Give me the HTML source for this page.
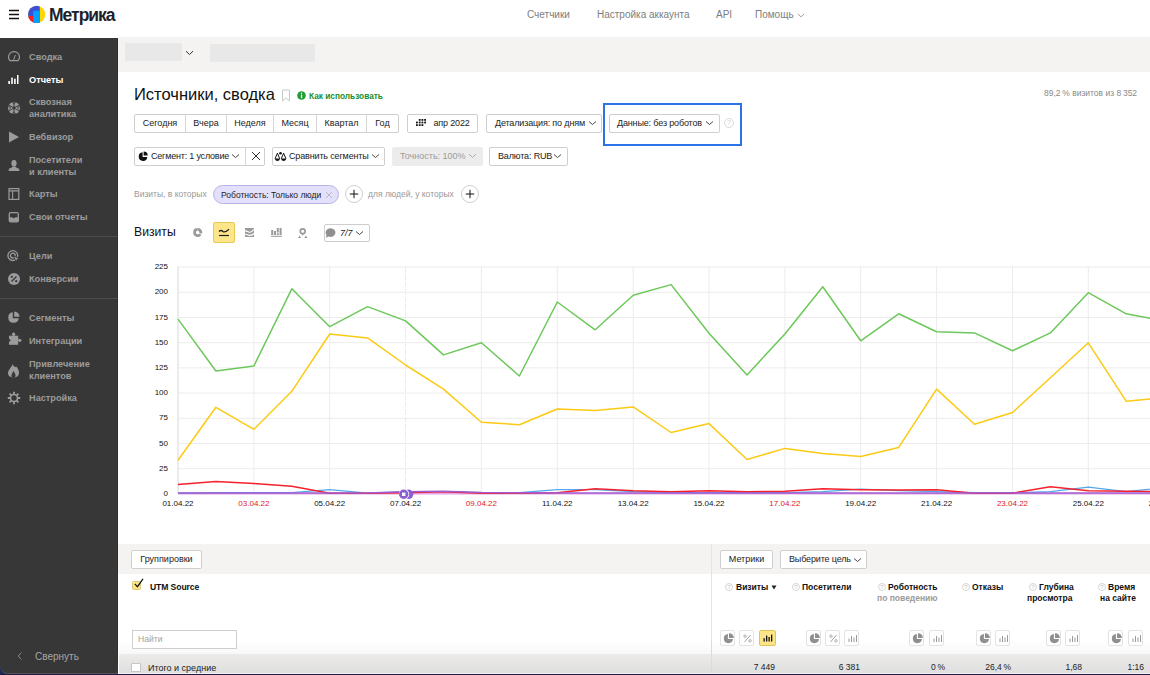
<!DOCTYPE html>
<html><head><meta charset="utf-8">
<style>
*{box-sizing:border-box;margin:0;padding:0}
html,body{width:1150px;height:675px;overflow:hidden;background:#fff;font-family:"Liberation Sans",sans-serif;position:relative}
.a{position:absolute;white-space:nowrap}
.nav{font-size:10px;color:#7d7d7d;top:9px;line-height:12px}
.side{left:0;top:38px;width:118px;height:637px;background:#373737;border-right:1px solid #2e2e2e}
.si{left:29px;font-size:9.2px;font-weight:bold;color:#9b9b9b;line-height:12px}
.sic{left:8px;width:12px;height:12px}
.btn{border:1px solid #cfcfcf;border-radius:2px;background:#fff;font-size:9px;color:#222;line-height:17px;text-align:center}
.grp .b{position:absolute;top:0;height:17px;border-right:1px solid #d6d6d6;font-size:9px;color:#222;line-height:17px;text-align:center}
.lbl{font-size:8px;color:#222}
.hdr{font-size:8.5px;font-weight:bold;color:#111;line-height:11px}
.q{width:8px;height:8px;border:1px solid #d6d6d6;border-radius:50%;font-size:6px;line-height:6px;text-align:center;color:#c4c4c4}
.ib{width:15px;height:16px;border:1px solid #e3e3e3;border-radius:2px;background:#fff}
.val{font-size:8.5px;color:#222;top:662px;line-height:11px}
</style></head><body>
<!-- header -->
<svg class="a" style="left:9px;top:9px" width="10" height="11" viewBox="0 0 10 11"><path d="M0 1.5H10M0 5.5H10M0 9.5H10" stroke="#111" stroke-width="1.4"/></svg>
<svg class="a" style="left:27px;top:5px" width="19" height="19" viewBox="0 0 19 19">
<defs><clipPath id="lc"><circle cx="9.67" cy="9.4" r="8.6"/></clipPath></defs>
<g clip-path="url(#lc)">
<rect x="0" y="0" width="19" height="19" fill="#ffd500"/>
<rect x="0" y="0" width="12.8" height="19" fill="#3a4fdc"/>
<rect x="0" y="11.1" width="6.4" height="9" fill="#ff1e1e"/>
<rect x="6.2" y="5.8" width="6.6" height="15" rx="1" fill="#00a2ff"/>
</g></svg>
<div class="a" style="left:49px;top:5px;font-size:17.5px;font-weight:bold;color:#1d1f2b;line-height:20px;letter-spacing:-1px">Метрика</div>
<div class="a nav" style="left:527px">Счетчики</div>
<div class="a nav" style="left:597px">Настройка аккаунта</div>
<div class="a nav" style="left:716px">API</div>
<div class="a nav" style="left:755px">Помощь</div>
<svg class="a" style="left:797px;top:13px" width="8" height="5" viewBox="0 0 8 5"><path d="M0.8 1 L4 3.8 L7.2 1" fill="none" stroke="#999" stroke-width="0.9"/></svg>

<!-- sidebar -->
<div class="a side"></div>
<div class="a si" style="top:51px">Сводка</div>
<div class="a si" style="top:74px;color:#fff">Отчеты</div>
<div class="a si" style="top:96px">Сквозная<br>аналитика</div>
<div class="a si" style="top:131px">Вебвизор</div>
<div class="a si" style="top:154px">Посетители<br>и клиенты</div>
<div class="a si" style="top:188px">Карты</div>
<div class="a si" style="top:211px">Свои отчеты</div>
<div class="a" style="left:0;top:236px;width:118px;height:1px;background:#4d4d4d"></div>
<div class="a si" style="top:250px">Цели</div>
<div class="a si" style="top:273px">Конверсии</div>
<div class="a" style="left:0;top:298px;width:118px;height:1px;background:#4d4d4d"></div>
<div class="a si" style="top:312px">Сегменты</div>
<div class="a si" style="top:335px">Интеграции</div>
<div class="a si" style="top:358px">Привлечение<br>клиентов</div>
<div class="a si" style="top:392px">Настройка</div>
<div class="a si" style="left:35px;top:651px;font-weight:normal;font-size:10px;color:#a6a6a6">Свернуть</div>
<svg class="a" style="left:17px;top:652px" width="6" height="8" viewBox="0 0 6 8"><path d="M4.5 0.5 L1.2 4 L4.5 7.5" fill="none" stroke="#8a8a8a" stroke-width="1"/></svg>

<!-- sidebar icons -->
<svg class="a" style="left:7px;top:49px" width="14" height="14" viewBox="0 0 14 14"><path d="M2.9 11.7 A5.5 5.5 0 1 1 11.1 11.7 Z" fill="none" stroke="#9b9b9b" stroke-width="1.2" stroke-linejoin="round"/><path d="M6.6 10.8 L8.4 6" stroke="#9b9b9b" stroke-width="1"/></svg>
<svg class="a" style="left:8px;top:74px" width="12" height="12" viewBox="0 0 12 12"><g fill="#fff"><rect x="0.3" y="7" width="1.7" height="3"/><rect x="3.2" y="3.6" width="1.6" height="6.4"/><rect x="6.1" y="4.7" width="1.6" height="5.3"/><rect x="9" y="1" width="1.5" height="9"/></g></svg>
<svg class="a" style="left:7px;top:101px" width="14" height="14" viewBox="0 0 14 14"><circle cx="7" cy="7" r="6" fill="#9b9b9b"/><g stroke="#373737" stroke-width="0.9"><path d="M7 0V14M0.9 3.5L13.1 10.5M0.9 10.5L13.1 3.5"/></g><g fill="none" stroke="#373737" stroke-width="0.8"><path d="M5.3 1 L7 3.2 L8.7 1"/><path d="M5.3 13 L7 10.8 L8.7 13"/><path d="M1.2 5.6 L3.6 5.9 L2.5 8.3" transform="rotate(0)"/><path d="M12.8 5.6 L10.4 5.9 L11.5 8.3"/></g><circle cx="7" cy="7" r="1.4" fill="#373737"/></svg>
<svg class="a" style="left:8px;top:131px" width="12" height="12" viewBox="0 0 12 12"><path d="M1 0.5 L11 6 L1 11.5 Z" fill="#9b9b9b"/></svg>
<svg class="a" style="left:8px;top:159px" width="12" height="13" viewBox="0 0 12 13"><ellipse cx="6" cy="4.3" rx="2.6" ry="3.3" fill="#9b9b9b"/><path d="M0.6 12 V11 Q0.6 9.3 3.4 8.8 L4.6 7.6 H7.4 L8.6 8.8 Q11.4 9.3 11.4 11 V12Z" fill="#9b9b9b"/></svg>
<svg class="a" style="left:8px;top:188px" width="12" height="12" viewBox="0 0 12 12"><rect x="1" y="0.6" width="9.8" height="10.8" fill="none" stroke="#9b9b9b" stroke-width="1.2"/><path d="M1 2.9H10.8M4.6 2.9V11.4" stroke="#9b9b9b" stroke-width="1.1"/></svg>
<svg class="a" style="left:8px;top:211px" width="12" height="12" viewBox="0 0 12 12"><rect x="1.3" y="1.6" width="9" height="9.2" rx="1.4" fill="none" stroke="#9b9b9b" stroke-width="1.3"/><path d="M1 6.2 H4.2 L5.8 7.6 L7.4 6.2 H10.6 V10.8 H1Z" fill="#9b9b9b"/></svg>
<svg class="a" style="left:7px;top:249px" width="14" height="14" viewBox="0 0 14 14"><circle cx="5.8" cy="6.6" r="4.9" fill="none" stroke="#9b9b9b" stroke-width="1.3"/><circle cx="5.8" cy="6.6" r="2.4" fill="none" stroke="#9b9b9b" stroke-width="1.3"/><path d="M6.2 7 L12.8 9.4 L10.2 10.3 L9.3 13 Z" fill="#9b9b9b" stroke="#383838" stroke-width="0.9" stroke-linejoin="round"/></svg>
<svg class="a" style="left:7px;top:272px" width="14" height="14" viewBox="0 0 14 14"><circle cx="7" cy="7" r="6" fill="#9b9b9b"/><path d="M4.5 9.5 L9.5 4.5" stroke="#383838" stroke-width="1.2"/><circle cx="4.8" cy="4.8" r="1.1" fill="#383838"/><circle cx="9.2" cy="9.2" r="1.1" fill="#383838"/></svg>
<svg class="a" style="left:7px;top:311px" width="13" height="13" viewBox="0 0 13 13"><path d="M5.8 1.2 A5.3 5.3 0 1 0 11.8 7.2 L5.8 7.2 Z" fill="#9b9b9b"/><path d="M7.2 0.5 A5.3 5.3 0 0 1 12.5 5.8 L7.2 5.8 Z" fill="#9b9b9b"/></svg>
<svg class="a" style="left:8px;top:332px" width="14" height="14" viewBox="0 0 14 14"><g fill="#9b9b9b"><rect x="1" y="3.7" width="9.2" height="9.1"/><circle cx="5.6" cy="2.2" r="1.6"/><rect x="5" y="2.2" width="1.2" height="2"/><circle cx="11.8" cy="8.3" r="1.6"/><rect x="10" y="7.7" width="2" height="1.2"/></g><circle cx="1" cy="8.3" r="1.4" fill="#383838"/></svg>
<svg class="a" style="left:8px;top:364px" width="11" height="14" viewBox="0 0 11 14"><path d="M4.8 0 C5.5 2.5 7 3.5 8.3 2.5 C10.5 5 11 7 11 9 C11 12 8.5 13.5 5.5 13.5 C2.5 13.5 0 12 0 9 C0 6 3 4 4.8 0 Z" fill="#9b9b9b"/><path d="M5.5 14 C3.8 14 3.3 12.5 3.5 11.2 C3.8 9.6 5 8.7 5.5 6.8 C6.2 8.7 7.5 9.6 7.5 11.2 C7.6 12.7 6.8 14 5.5 14Z" fill="#383838"/></svg>
<svg class="a" style="left:7px;top:391px" width="14" height="14" viewBox="0 0 14 14"><g fill="none" stroke="#9b9b9b"><circle cx="7" cy="7" r="3.5" stroke-width="1.6"/><path d="M7 0.8v2.4M7 10.8v2.4M0.8 7h2.4M10.8 7h2.4M2.6 2.6l1.7 1.7M9.7 9.7l1.7 1.7M2.6 11.4l1.7-1.7M9.7 4.3l1.7-1.7" stroke-width="1.8"/></g></svg>
<!-- top band -->
<div class="a" style="left:118px;top:37px;width:1032px;height:35px;background:#f4f3f1"></div>
<div class="a" style="left:125px;top:43px;width:57px;height:18px;background:#e8e8e8;border-radius:1px"></div>
<svg class="a" style="left:185px;top:50px" width="9" height="6" viewBox="0 0 9 6"><path d="M1 1.2 L4.5 4.5 L8 1.2" fill="none" stroke="#333" stroke-width="1"/></svg>
<div class="a" style="left:210px;top:44px;width:105px;height:18px;background:#e8e8e8;border-radius:1px"></div>

<!-- title -->
<div class="a" style="left:134px;top:84px;font-size:16.5px;color:#111;line-height:21px">Источники, сводка</div>
<svg class="a" style="left:281px;top:89px" width="10" height="13" viewBox="0 0 10 13"><path d="M1.5 1 H8.5 V12 L5 8.8 L1.5 12 Z" fill="none" stroke="#c8c8c8" stroke-width="1"/></svg>
<svg class="a" style="left:297px;top:91px" width="9" height="9" viewBox="0 0 9 9"><circle cx="4.5" cy="4.5" r="4.3" fill="#1f9d31"/><rect x="3.9" y="3.6" width="1.3" height="3.6" fill="#fff"/><circle cx="4.5" cy="2.3" r="0.75" fill="#fff"/></svg>
<div class="a" style="left:309px;top:91px;font-size:8.3px;font-weight:bold;color:#178f2b;line-height:11px">Как использовать</div>
<div class="a" style="left:1044px;top:88px;font-size:8.5px;color:#8a8a8a;line-height:11px">89,2&#8239;% визитов из 8&#8239;352</div>

<!-- period group -->
<div class="a grp" style="left:134px;top:114px;width:265px;height:19px;border:1px solid #cfcfcf;border-radius:2px;background:#fff">
 <div class="b" style="left:0;width:51px">Сегодня</div>
 <div class="b" style="left:51px;width:41px">Вчера</div>
 <div class="b" style="left:92px;width:47px">Неделя</div>
 <div class="b" style="left:139px;width:43px">Месяц</div>
 <div class="b" style="left:182px;width:50px">Квартал</div>
 <div class="b" style="left:232px;width:31px;border-right:none">Год</div>
</div>
<div class="a btn" style="left:407px;top:114px;width:71px;height:19px;padding-left:18px;letter-spacing:-0.15px">апр 2022</div>
<svg class="a" style="left:416px;top:119px" width="11" height="8" viewBox="0 0 11 8"><g fill="#111"><rect x="2.8" y="0.0" width="1.8" height="1.8"/><rect x="5.5" y="0.0" width="1.8" height="1.8"/><rect x="8.2" y="0.0" width="1.8" height="1.8"/><rect x="0.0" y="2.6" width="1.8" height="1.8"/><rect x="2.8" y="2.6" width="1.8" height="1.8"/><rect x="5.5" y="2.6" width="1.8" height="1.8"/><rect x="8.2" y="2.6" width="1.8" height="1.8"/><rect x="0.0" y="5.2" width="1.8" height="1.8"/><rect x="2.8" y="5.2" width="1.8" height="1.8"/><rect x="5.5" y="5.2" width="1.8" height="1.8"/></g></svg>
<div class="a btn" style="left:486px;top:114px;width:116px;height:19px;text-align:left;padding-left:8px;letter-spacing:-0.15px">Детализация: по дням</div>
<svg class="a" style="left:588px;top:120px" width="9" height="6" viewBox="0 0 9 6"><path d="M1 1.5 L4.5 4.5 L8 1.5" fill="none" stroke="#333" stroke-width="0.9"/></svg>
<div class="a" style="left:603px;top:103px;width:139px;height:43px;border:2px solid #2d72e6"></div>
<div class="a btn" style="left:609px;top:114px;width:111px;height:19px;text-align:left;padding-left:7px;letter-spacing:-0.15px">Данные: без роботов</div>
<svg class="a" style="left:705px;top:120px" width="9" height="6" viewBox="0 0 9 6"><path d="M1 1.5 L4.5 4.5 L8 1.5" fill="none" stroke="#333" stroke-width="0.9"/></svg>
<div class="a" style="left:724px;top:118px;width:10px;height:10px;border:1px solid #dadada;border-radius:50%;font-size:7px;color:#cfcfcf;text-align:center;line-height:8px">?</div>

<!-- segment row -->
<div class="a btn" style="left:134px;top:147px;width:131px;height:19px;text-align:left;padding-left:16px;letter-spacing:-0.2px">Сегмент: 1 условие</div>
<div class="a" style="left:245px;top:148px;width:1px;height:17px;background:#d6d6d6"></div>
<svg class="a" style="left:138px;top:151px" width="11" height="11" viewBox="0 0 11 11"><path d="M4.6 1.3 A4.3 4.3 0 1 0 9.3 6 L4.6 6 Z" fill="#111"/><path d="M5.6 0.5 A4.1 4.1 0 0 1 9.7 4.6 L5.6 4.6 Z" fill="#111"/></svg>
<svg class="a" style="left:231px;top:153px" width="9" height="6" viewBox="0 0 9 6"><path d="M1 1.5 L4.5 4.5 L8 1.5" fill="none" stroke="#333" stroke-width="0.9"/></svg>
<svg class="a" style="left:251px;top:151px" width="10" height="10" viewBox="0 0 10 10"><path d="M1 1 L9 9 M9 1 L1 9" stroke="#333" stroke-width="1"/></svg>
<div class="a btn" style="left:272px;top:147px;width:113px;height:19px;text-align:left;padding-left:16px;letter-spacing:-0.15px">Сравнить сегменты</div>
<svg class="a" style="left:274px;top:151px" width="13" height="11" viewBox="0 0 13 11"><g stroke="#111" stroke-width="1" fill="#fff" stroke-linejoin="round"><path d="M3.4 2.2 L1.2 7.4 A2.3 2.3 0 0 0 5.6 7.4 Z"/><path d="M9.6 2.2 L7.4 7.4 A2.3 2.3 0 0 0 11.8 7.4 Z"/></g><g fill="#111"><path d="M1 7.6 A2.45 2.45 0 0 0 5.9 7.6 Z"/><path d="M7.2 7.6 A2.45 2.45 0 0 0 12.1 7.6 Z"/><circle cx="6.5" cy="2.3" r="1.3"/></g></svg>
<svg class="a" style="left:371px;top:153px" width="9" height="6" viewBox="0 0 9 6"><path d="M1 1.5 L4.5 4.5 L8 1.5" fill="none" stroke="#333" stroke-width="0.9"/></svg>
<div class="a" style="left:392px;top:147px;width:91px;height:19px;background:#ececec;border-radius:2px;font-size:9px;color:#9a9a9a;line-height:19px;padding-left:8px">Точность: 100%</div>
<svg class="a" style="left:468px;top:153px" width="9" height="6" viewBox="0 0 9 6"><path d="M1 1 L4.5 4.5 L8 1" fill="none" stroke="#aaa" stroke-width="1"/></svg>
<div class="a btn" style="left:489px;top:147px;width:79px;height:19px;text-align:left;padding-left:8px;letter-spacing:-0.15px">Валюта: RUB</div>
<svg class="a" style="left:553px;top:153px" width="9" height="6" viewBox="0 0 9 6"><path d="M1 1.5 L4.5 4.5 L8 1.5" fill="none" stroke="#333" stroke-width="0.9"/></svg>

<!-- filter row -->
<div class="a" style="left:134px;top:189px;font-size:8.5px;color:#999;line-height:11px">Визиты, в которых</div>
<div class="a" style="left:213px;top:185px;width:126px;height:19px;border:1px solid #b9b4e8;border-radius:10px;background:#e3e0fb;font-size:8.5px;color:#222;line-height:18px;padding-left:7px">Роботность: Только люди</div>
<svg class="a" style="left:325px;top:191px" width="8" height="8" viewBox="0 0 8 8"><path d="M1 1 L7 7 M7 1 L1 7" stroke="#b0b0b0" stroke-width="0.8"/></svg>
<div class="a" style="left:345px;top:185px;width:18px;height:18px;border:1px solid #cfcfcf;border-radius:50%"></div>
<svg class="a" style="left:349px;top:189px" width="10" height="10" viewBox="0 0 10 10"><path d="M5 0.8 V9.2 M0.8 5 H9.2" stroke="#111" stroke-width="1"/></svg>
<div class="a" style="left:368px;top:189px;font-size:8.5px;color:#999;line-height:11px">для людей, у которых</div>
<div class="a" style="left:461px;top:185px;width:18px;height:18px;border:1px solid #cfcfcf;border-radius:50%"></div>
<svg class="a" style="left:465px;top:189px" width="10" height="10" viewBox="0 0 10 10"><path d="M5 0.8 V9.2 M0.8 5 H9.2" stroke="#111" stroke-width="1"/></svg>

<!-- visits row -->
<div class="a" style="left:134px;top:225px;font-size:12.2px;color:#111;line-height:15px">Визиты</div>
<svg class="a" style="left:192px;top:227px" width="12" height="11" viewBox="0 0 12 11"><circle cx="5.7" cy="5.5" r="3.1" fill="none" stroke="#9a9a9a" stroke-width="2.8" stroke-dasharray="5.9 0.9 11.8 0.9" transform="rotate(-95 5.7 5.5)"/></svg>
<div class="a" style="left:213px;top:222px;width:22px;height:21px;background:#fde58a;border:1px solid #e7c95a;border-radius:2px"></div>
<svg class="a" style="left:218px;top:227px" width="12" height="10" viewBox="0 0 12 10"><path d="M1 4.5 C2.5 3 3.5 3 5 4.5 C6.5 5.8 8 5 11 2.2" fill="none" stroke="#222" stroke-width="1.3"/><path d="M1 8.5 H11" stroke="#222" stroke-width="1.2"/></svg>
<svg class="a" style="left:245px;top:228px" width="9" height="9" viewBox="0 0 9 9"><rect x="0" y="0" width="9" height="9" fill="#9a9a9a"/><g fill="none" stroke="#fff" stroke-width="1.1"><path d="M-0.5 2.9 C2 2.4 3.3 4.2 4.8 4.3 C6.3 4.3 7.8 2.8 9.5 1"/><path d="M-0.5 6.3 C2 5.9 3.3 7.3 4.8 7.4 C6.3 7.4 7.8 6.6 9.5 5.4"/></g></svg>
<svg class="a" style="left:271px;top:228px" width="11" height="9" viewBox="0 0 11 9"><g fill="#9a9a9a"><rect x="0.2" y="2" width="2" height="5"/><rect x="3" y="3" width="2" height="4"/><rect x="5.8" y="0" width="2" height="4.5"/><rect x="5.8" y="5.2" width="2" height="1.8"/><rect x="8.6" y="0" width="2" height="7"/><rect x="0" y="7.8" width="11" height="1"/></g></svg>
<svg class="a" style="left:298px;top:228px" width="10" height="10" viewBox="0 0 10 10"><circle cx="4.7" cy="3.3" r="2.4" fill="none" stroke="#9a9a9a" stroke-width="1.7"/><path d="M2.8 5 H6.6 L4.7 7.8Z" fill="#9a9a9a"/><path d="M0 10 L1.8 7.6 L3 10Z M6.4 10 L7.7 7.6 L9.5 10Z" fill="#9a9a9a"/></svg>
<div class="a btn" style="left:324px;top:224px;width:46px;height:18px;border-color:#cdcdcd"></div>
<svg class="a" style="left:325px;top:228px" width="11" height="10" viewBox="0 0 11 10"><path d="M5.6 0.2 A4.8 4.4 0 1 1 3.6 8.6 L0.8 9.8 L1.6 7.2 A4.8 4.4 0 0 1 5.6 0.2Z" fill="#8f8f8f"/></svg>
<div class="a" style="left:340px;top:228px;font-size:9px;color:#222;line-height:11px;font-style:italic">7/7</div>
<svg class="a" style="left:355px;top:230px" width="9" height="6" viewBox="0 0 9 6"><path d="M1 1.5 L4.5 4.5 L8 1.5" fill="none" stroke="#333" stroke-width="0.9"/></svg>
<svg class="a" style="left:0;top:0" width="1150" height="520" viewBox="0 0 1150 520">
<line x1="178" y1="493.9" x2="1150" y2="493.9" stroke="#ececec" stroke-width="1"/>
<text x="168" y="495.9" text-anchor="end" font-size="8" fill="#111">0</text>
<line x1="178" y1="468.7" x2="1150" y2="468.7" stroke="#ececec" stroke-width="1"/>
<text x="168" y="470.7" text-anchor="end" font-size="8" fill="#111">25</text>
<line x1="178" y1="443.5" x2="1150" y2="443.5" stroke="#ececec" stroke-width="1"/>
<text x="168" y="445.5" text-anchor="end" font-size="8" fill="#111">50</text>
<line x1="178" y1="418.3" x2="1150" y2="418.3" stroke="#ececec" stroke-width="1"/>
<text x="168" y="420.3" text-anchor="end" font-size="8" fill="#111">75</text>
<line x1="178" y1="393.1" x2="1150" y2="393.1" stroke="#ececec" stroke-width="1"/>
<text x="168" y="395.1" text-anchor="end" font-size="8" fill="#111">100</text>
<line x1="178" y1="367.9" x2="1150" y2="367.9" stroke="#ececec" stroke-width="1"/>
<text x="168" y="369.9" text-anchor="end" font-size="8" fill="#111">125</text>
<line x1="178" y1="342.7" x2="1150" y2="342.7" stroke="#ececec" stroke-width="1"/>
<text x="168" y="344.7" text-anchor="end" font-size="8" fill="#111">150</text>
<line x1="178" y1="317.5" x2="1150" y2="317.5" stroke="#ececec" stroke-width="1"/>
<text x="168" y="319.5" text-anchor="end" font-size="8" fill="#111">175</text>
<line x1="178" y1="292.3" x2="1150" y2="292.3" stroke="#ececec" stroke-width="1"/>
<text x="168" y="294.3" text-anchor="end" font-size="8" fill="#111">200</text>
<line x1="178" y1="267.1" x2="1150" y2="267.1" stroke="#ececec" stroke-width="1"/>
<text x="168" y="269.1" text-anchor="end" font-size="8" fill="#111">225</text>
<line x1="178.0" y1="266.5" x2="178.0" y2="493.3" stroke="#ececec" stroke-width="1"/>
<text x="178.0" y="506" text-anchor="middle" font-size="8" fill="#111">01.04.22</text>
<line x1="253.9" y1="266.5" x2="253.9" y2="493.3" stroke="#ececec" stroke-width="1"/>
<text x="253.9" y="506" text-anchor="middle" font-size="8" fill="#e0161e">03.04.22</text>
<line x1="329.7" y1="266.5" x2="329.7" y2="493.3" stroke="#ececec" stroke-width="1"/>
<text x="329.7" y="506" text-anchor="middle" font-size="8" fill="#111">05.04.22</text>
<line x1="405.6" y1="266.5" x2="405.6" y2="493.3" stroke="#ececec" stroke-width="1" stroke-dasharray="6 1.5"/>
<text x="405.6" y="506" text-anchor="middle" font-size="8" fill="#111">07.04.22</text>
<line x1="481.4" y1="266.5" x2="481.4" y2="493.3" stroke="#ececec" stroke-width="1"/>
<text x="481.4" y="506" text-anchor="middle" font-size="8" fill="#e0161e">09.04.22</text>
<line x1="557.3" y1="266.5" x2="557.3" y2="493.3" stroke="#ececec" stroke-width="1"/>
<text x="557.3" y="506" text-anchor="middle" font-size="8" fill="#111">11.04.22</text>
<line x1="633.2" y1="266.5" x2="633.2" y2="493.3" stroke="#ececec" stroke-width="1"/>
<text x="633.2" y="506" text-anchor="middle" font-size="8" fill="#111">13.04.22</text>
<line x1="709.0" y1="266.5" x2="709.0" y2="493.3" stroke="#ececec" stroke-width="1"/>
<text x="709.0" y="506" text-anchor="middle" font-size="8" fill="#111">15.04.22</text>
<line x1="784.9" y1="266.5" x2="784.9" y2="493.3" stroke="#ececec" stroke-width="1"/>
<text x="784.9" y="506" text-anchor="middle" font-size="8" fill="#e0161e">17.04.22</text>
<line x1="860.7" y1="266.5" x2="860.7" y2="493.3" stroke="#ececec" stroke-width="1"/>
<text x="860.7" y="506" text-anchor="middle" font-size="8" fill="#111">19.04.22</text>
<line x1="936.6" y1="266.5" x2="936.6" y2="493.3" stroke="#ececec" stroke-width="1"/>
<text x="936.6" y="506" text-anchor="middle" font-size="8" fill="#111">21.04.22</text>
<line x1="1012.5" y1="266.5" x2="1012.5" y2="493.3" stroke="#ececec" stroke-width="1"/>
<text x="1012.5" y="506" text-anchor="middle" font-size="8" fill="#e0161e">23.04.22</text>
<line x1="1088.3" y1="266.5" x2="1088.3" y2="493.3" stroke="#ececec" stroke-width="1"/>
<text x="1088.3" y="506" text-anchor="middle" font-size="8" fill="#111">25.04.22</text>
<line x1="1164.2" y1="266.5" x2="1164.2" y2="493.3" stroke="#ececec" stroke-width="1"/>
<text x="1164.2" y="506" text-anchor="middle" font-size="8" fill="#111">27.04.22</text>
<line x1="178" y1="266.5" x2="178" y2="493.3" stroke="#e2e2e2" stroke-width="1"/>
<polyline points="178.0,493.7 215.9,493.7 253.9,493.7 291.8,493.7 329.7,493.7 367.6,493.7 405.6,493.7 443.5,493.7 481.4,493.7 519.4,493.7 557.3,493.7 595.2,493.7 633.2,493.7 671.1,493.7 709.0,493.7 747.0,493.7 784.9,493.7 822.8,493.7 860.7,493.7 898.7,493.7 936.6,493.7 974.5,493.7 1012.5,493.7 1050.4,493.7 1088.3,493.7 1126.2,493.7 1164.2,493.7" fill="none" stroke="#e8a6e8" stroke-width="1.5" stroke-linejoin="round"/>
<polyline points="178.0,493.2 215.9,492.7 253.9,492.7 291.8,492.7 329.7,489.7 367.6,493.2 405.6,491.7 443.5,491.7 481.4,492.7 519.4,492.7 557.3,489.7 595.2,489.7 633.2,491.7 671.1,492.7 709.0,492.7 747.0,492.7 784.9,492.7 822.8,491.7 860.7,489.1 898.7,490.7 936.6,491.7 974.5,492.7 1012.5,492.7 1050.4,491.7 1088.3,487.2 1126.2,491.7 1164.2,487.7" fill="none" stroke="#56a8ec" stroke-width="1.3" stroke-linejoin="round"/>
<polyline points="178.0,484.4 215.9,481.6 253.9,483.6 291.8,486.2 329.7,493.2 367.6,493.2 405.6,492.7 443.5,491.7 481.4,493.2 519.4,493.2 557.3,492.7 595.2,488.7 633.2,490.7 671.1,491.7 709.0,490.7 747.0,491.7 784.9,491.2 822.8,488.7 860.7,489.7 898.7,490.0 936.6,489.7 974.5,493.2 1012.5,493.2 1050.4,486.7 1088.3,490.7 1126.2,491.2 1164.2,491.7" fill="none" stroke="#f5222d" stroke-width="1.5" stroke-linejoin="round"/>
<polyline points="178.0,493.1 215.9,493.1 253.9,493.1 291.8,493.1 329.7,493.1 367.6,493.1 405.6,491.7 443.5,491.2 481.4,492.5 519.4,492.7 557.3,493.1 595.2,493.1 633.2,493.1 671.1,493.1 709.0,493.1 747.0,493.1 784.9,493.1 822.8,493.1 860.7,493.1 898.7,493.1 936.6,493.1 974.5,493.1 1012.5,493.1 1050.4,493.1 1088.3,493.1 1126.2,493.1 1164.2,493.1" fill="none" stroke="#a05cd0" stroke-width="1.5" stroke-linejoin="round"/>
<polyline points="178.0,460.3 215.9,407.3 253.9,429.3 291.8,391.3 329.7,334.0 367.6,337.9 405.6,365.0 443.5,389.1 481.4,422.3 519.4,424.7 557.3,409.0 595.2,410.4 633.2,406.9 671.1,432.5 709.0,423.6 747.0,459.5 784.9,448.4 822.8,453.5 860.7,456.4 898.7,447.4 936.6,389.1 974.5,424.3 1012.5,412.5 1050.4,377.7 1088.3,342.8 1126.2,401.2 1164.2,397.5" fill="none" stroke="#fcca14" stroke-width="1.5" stroke-linejoin="round"/>
<polyline points="178.0,319.1 215.9,371.0 253.9,366.0 291.8,288.8 329.7,326.7 367.6,306.6 405.6,320.9 443.5,354.9 481.4,342.8 519.4,376.0 557.3,302.0 595.2,329.8 633.2,295.3 671.1,284.6 709.0,333.3 747.0,374.9 784.9,334.0 822.8,286.7 860.7,340.8 898.7,313.8 936.6,331.8 974.5,332.9 1012.5,350.7 1050.4,332.9 1088.3,292.7 1126.2,313.8 1164.2,321.0" fill="none" stroke="#6cc85a" stroke-width="1.5" stroke-linejoin="round"/>
<circle cx="408.5" cy="494.3" r="4.8" fill="#8b5fcf"/><circle cx="404" cy="494.3" r="5.2" fill="#fff"/><circle cx="403.7" cy="494.3" r="4.7" fill="#8b5fcf"/><rect x="402" y="492.6" width="3.4" height="3.4" fill="#fff"/>
</svg>
<!-- table -->
<div class="a" style="left:118px;top:544px;width:1032px;height:30px;background:#f4f3f1"></div>
<div class="a" style="left:711px;top:544px;width:1px;height:130px;background:#e4e4e4"></div>
<div class="a btn" style="left:131px;top:550px;width:71px;height:19px">Группировки</div>
<div class="a btn" style="left:720px;top:550px;width:53px;height:19px">Метрики</div>
<div class="a btn" style="left:780px;top:550px;width:87px;height:19px;text-align:left;padding-left:8px;letter-spacing:-0.15px">Выберите цель</div>
<svg class="a" style="left:853px;top:557px" width="9" height="6" viewBox="0 0 9 6"><path d="M1 1.5 L4.5 4.5 L8 1.5" fill="none" stroke="#333" stroke-width="0.9"/></svg>

<div class="a" style="left:132px;top:581px;width:9px;height:9px;background:#fde58a;border:1px solid #dcc878;border-radius:1.5px"></div>
<svg class="a" style="left:133px;top:577px" width="11" height="11" viewBox="0 0 11 11"><path d="M1.8 6.8 L4.5 9.7 L10 1.8" fill="none" stroke="#111" stroke-width="1.2"/></svg>
<div class="a hdr" style="left:150px;top:582px;font-size:8.6px;letter-spacing:-0.1px">UTM Source</div>

<div class="a" style="left:132px;top:630px;width:105px;height:19px;border:1px solid #cfcfcf;background:#fff;z-index:2;font-size:8.6px;color:#a3a3a3;line-height:17px;padding-left:5px">Найти</div>

<div class="a" style="left:119px;top:640px;width:1031px;height:14px;background:linear-gradient(#fff,#f8f8f8)"></div>
<div class="a" style="left:119px;top:654px;width:1031px;height:19px;background:linear-gradient(#ecebe9,#dfdfdf)"></div>
<div class="a" style="left:711px;top:640px;width:1px;height:33px;background:#dcdcdc"></div>
<div class="a" style="left:131px;top:663px;width:9.5px;height:9px;border:1px solid #c4c4c4;border-radius:1px;background:#fff"></div>
<div class="a" style="left:148px;top:663px;font-size:9px;color:#222;line-height:11px">Итого и средние</div>

<!-- metric headers -->
<div class="a q" style="left:725px;top:583px">?</div><div class="a hdr" style="left:736px;top:582px">Визиты</div>
<svg class="a" style="left:771px;top:585px" width="6" height="5" viewBox="0 0 6 5"><path d="M0.5 0.5 H5.5 L3 4.5Z" fill="#222"/></svg>
<div class="a q" style="left:792px;top:583px">?</div><div class="a hdr" style="left:802px;top:582px">Посетители</div>
<div class="a q" style="left:878px;top:583px">?</div><div class="a hdr" style="left:888px;top:582px">Роботность</div>
<div class="a hdr" style="left:877px;top:593px;color:#9b9b9b">по поведению</div>
<div class="a q" style="left:962px;top:583px">?</div><div class="a hdr" style="left:972px;top:582px">Отказы</div>
<div class="a q" style="left:1029px;top:583px">?</div><div class="a hdr" style="left:1039px;top:582px">Глубина</div>
<div class="a hdr" style="left:1027px;top:593px">просмотра</div>
<div class="a q" style="left:1098px;top:583px">?</div><div class="a hdr" style="left:1108px;top:582px">Время</div>
<div class="a hdr" style="left:1100px;top:593px">на сайте</div>

<!-- icon boxes -->
<div class="a ib" style="left:720px;top:630px"><svg width="13" height="13" viewBox="0 0 13 13" style="position:absolute;left:1px;top:1px"><path d="M5.9 2 A4.6 4.6 0 1 0 11 7.1 L5.9 7.1 Z" fill="#8f8f8f"/><path d="M7 1.2 A4.6 4.6 0 0 1 11.8 6 L7 6 Z" fill="#8f8f8f"/></svg></div>
<div class="a ib" style="left:739px;top:630px"><svg width="13" height="13" viewBox="0 0 13 13" style="position:absolute;left:1px;top:1px"><path d="M3.5 10 L9.5 3" stroke="#9a9a9a" stroke-width="0.9"/><circle cx="4" cy="4.2" r="1.2" fill="none" stroke="#9a9a9a" stroke-width="0.8"/><circle cx="9" cy="8.8" r="1.2" fill="none" stroke="#9a9a9a" stroke-width="0.8"/></svg></div>
<div class="a ib" style="left:759px;top:630px;width:17px;background:#fde58a;border-color:#e0c45a"><svg width="13" height="13" viewBox="0 0 13 13" style="position:absolute;left:1px;top:1px"><g fill="#111"><rect x="2.5" y="6.2" width="1.3" height="3.3"/><rect x="5" y="3.6" width="1.3" height="5.9"/><rect x="7.5" y="5" width="1.3" height="4.5"/><rect x="10" y="2.6" width="1.3" height="6.9"/></g></svg></div>
<div class="a ib" style="left:806px;top:630px"><svg width="13" height="13" viewBox="0 0 13 13" style="position:absolute;left:1px;top:1px"><path d="M5.9 2 A4.6 4.6 0 1 0 11 7.1 L5.9 7.1 Z" fill="#8f8f8f"/><path d="M7 1.2 A4.6 4.6 0 0 1 11.8 6 L7 6 Z" fill="#8f8f8f"/></svg></div>
<div class="a ib" style="left:825px;top:630px"><svg width="13" height="13" viewBox="0 0 13 13" style="position:absolute;left:1px;top:1px"><path d="M3.5 10 L9.5 3" stroke="#9a9a9a" stroke-width="0.9"/><circle cx="4" cy="4.2" r="1.2" fill="none" stroke="#9a9a9a" stroke-width="0.8"/><circle cx="9" cy="8.8" r="1.2" fill="none" stroke="#9a9a9a" stroke-width="0.8"/></svg></div>
<div class="a ib" style="left:844px;top:630px"><svg width="13" height="13" viewBox="0 0 13 13" style="position:absolute;left:1px;top:1px"><g fill="#9a9a9a"><rect x="2.5" y="6.5" width="1" height="3.5"/><rect x="5" y="4" width="1" height="6"/><rect x="7.5" y="5.5" width="1" height="4.5"/><rect x="10" y="3" width="1" height="7"/></g></svg></div>
<div class="a ib" style="left:909px;top:630px"><svg width="13" height="13" viewBox="0 0 13 13" style="position:absolute;left:1px;top:1px"><path d="M5.9 2 A4.6 4.6 0 1 0 11 7.1 L5.9 7.1 Z" fill="#8f8f8f"/><path d="M7 1.2 A4.6 4.6 0 0 1 11.8 6 L7 6 Z" fill="#8f8f8f"/></svg></div>
<div class="a ib" style="left:929px;top:630px"><svg width="13" height="13" viewBox="0 0 13 13" style="position:absolute;left:1px;top:1px"><g fill="#9a9a9a"><rect x="2.5" y="6.5" width="1" height="3.5"/><rect x="5" y="4" width="1" height="6"/><rect x="7.5" y="5.5" width="1" height="4.5"/><rect x="10" y="3" width="1" height="7"/></g></svg></div>
<div class="a ib" style="left:976px;top:630px"><svg width="13" height="13" viewBox="0 0 13 13" style="position:absolute;left:1px;top:1px"><path d="M5.9 2 A4.6 4.6 0 1 0 11 7.1 L5.9 7.1 Z" fill="#8f8f8f"/><path d="M7 1.2 A4.6 4.6 0 0 1 11.8 6 L7 6 Z" fill="#8f8f8f"/></svg></div>
<div class="a ib" style="left:995px;top:630px"><svg width="13" height="13" viewBox="0 0 13 13" style="position:absolute;left:1px;top:1px"><g fill="#9a9a9a"><rect x="2.5" y="6.5" width="1" height="3.5"/><rect x="5" y="4" width="1" height="6"/><rect x="7.5" y="5.5" width="1" height="4.5"/><rect x="10" y="3" width="1" height="7"/></g></svg></div>
<div class="a ib" style="left:1046px;top:630px"><svg width="13" height="13" viewBox="0 0 13 13" style="position:absolute;left:1px;top:1px"><path d="M5.9 2 A4.6 4.6 0 1 0 11 7.1 L5.9 7.1 Z" fill="#8f8f8f"/><path d="M7 1.2 A4.6 4.6 0 0 1 11.8 6 L7 6 Z" fill="#8f8f8f"/></svg></div>
<div class="a ib" style="left:1065px;top:630px"><svg width="13" height="13" viewBox="0 0 13 13" style="position:absolute;left:1px;top:1px"><g fill="#9a9a9a"><rect x="2.5" y="6.5" width="1" height="3.5"/><rect x="5" y="4" width="1" height="6"/><rect x="7.5" y="5.5" width="1" height="4.5"/><rect x="10" y="3" width="1" height="7"/></g></svg></div>
<div class="a ib" style="left:1108px;top:630px"><svg width="13" height="13" viewBox="0 0 13 13" style="position:absolute;left:1px;top:1px"><path d="M5.9 2 A4.6 4.6 0 1 0 11 7.1 L5.9 7.1 Z" fill="#8f8f8f"/><path d="M7 1.2 A4.6 4.6 0 0 1 11.8 6 L7 6 Z" fill="#8f8f8f"/></svg></div>
<div class="a ib" style="left:1128px;top:630px"><svg width="13" height="13" viewBox="0 0 13 13" style="position:absolute;left:1px;top:1px"><g fill="#9a9a9a"><rect x="2.5" y="6.5" width="1" height="3.5"/><rect x="5" y="4" width="1" height="6"/><rect x="7.5" y="5.5" width="1" height="4.5"/><rect x="10" y="3" width="1" height="7"/></g></svg></div>
<div class="a val" style="left:695px;width:80px;text-align:right">7 449</div>
<div class="a val" style="left:780px;width:80px;text-align:right">6 381</div>
<div class="a val" style="left:865px;width:80px;text-align:right">0&#8239;%</div>
<div class="a val" style="left:931px;width:80px;text-align:right">26,4&#8239;%</div>
<div class="a val" style="left:1002px;width:80px;text-align:right">1,68</div>
<div class="a val" style="left:1064px;width:80px;text-align:right">1:16</div>
<div class="a" style="left:0;top:664px;width:12px;height:11px;background:#1f2a5c"></div><div class="a" style="left:0;top:663px;width:118px;height:11px;background:#373737;border-bottom:1px solid #555;border-bottom-left-radius:8px"></div><div class="a" style="left:118px;top:673px;width:1032px;height:1px;background:#f4f4f4"></div><div class="a" style="left:0;top:674px;width:1150px;height:1px;background:#221a40"></div>
</body></html>
